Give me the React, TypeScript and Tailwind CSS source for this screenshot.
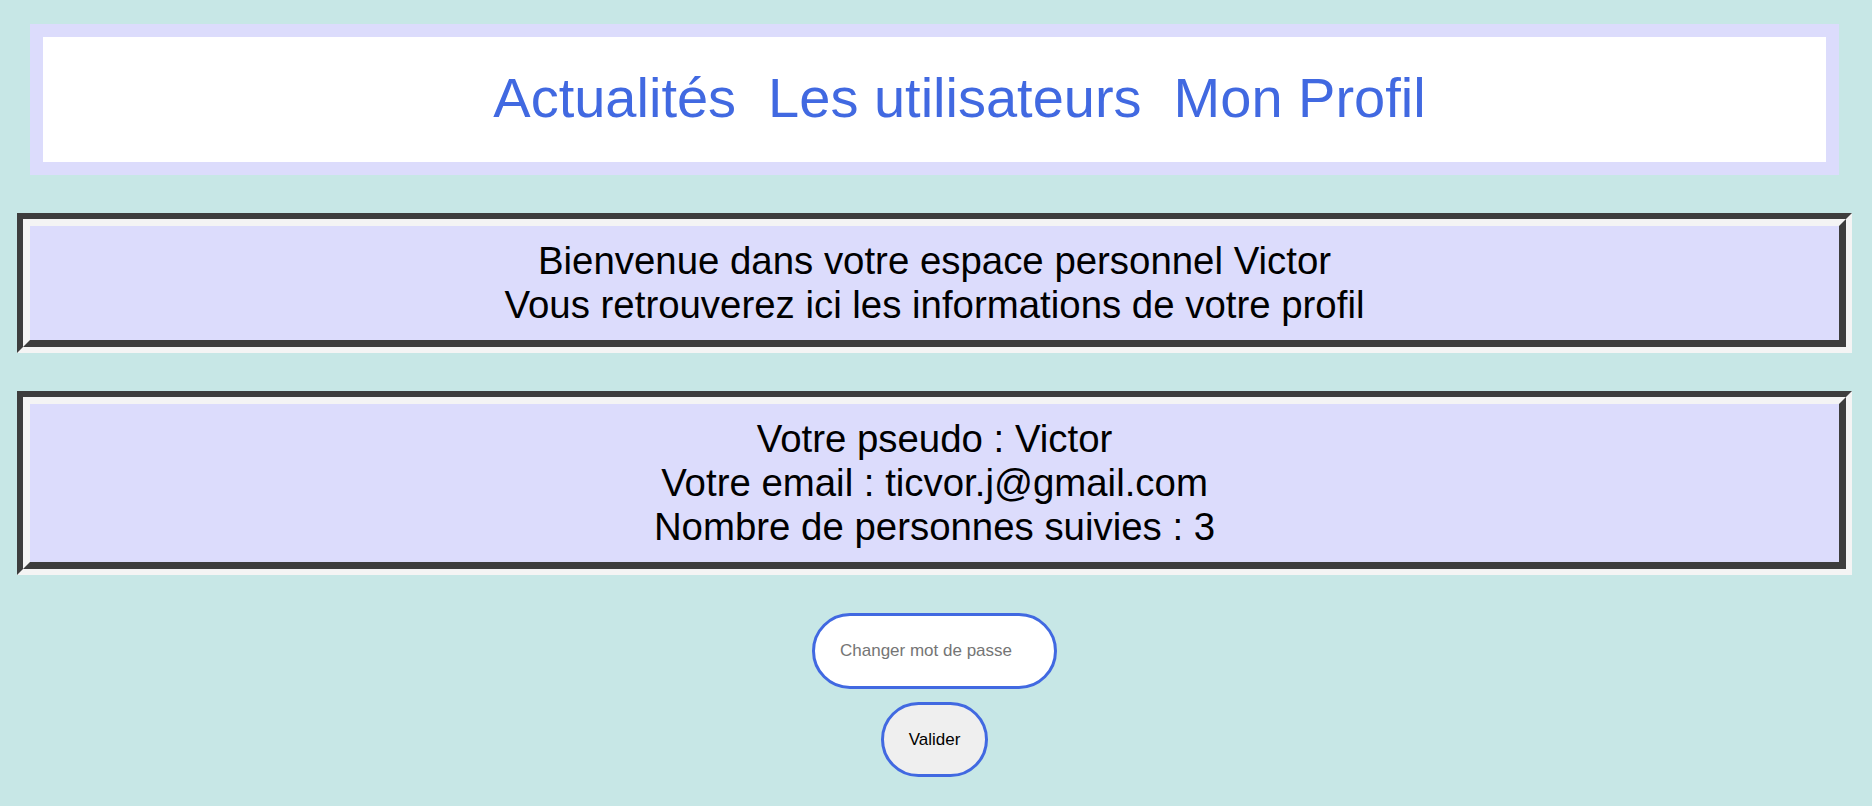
import React from 'react';

const font = "font-['Liberation_Sans',Arial,sans-serif]";

// groove-like bevel frame
function Panel({ children }: { children: React.ReactNode }) {
  return (
    <div className="mx-[17px] border-[6px] border-t-[#3d3d3d] border-l-[#3d3d3d] border-b-[#f4f4f4] border-r-[#f4f4f4]">
      <div className="border-[7px] border-t-[#f4f4f4] border-l-[#f4f4f4] border-b-[#3d3d3d] border-r-[#3d3d3d] bg-[#dcdcfc] py-[13px] text-center text-[38.4px] leading-[normal] text-black">
        {children}
      </div>
    </div>
  );
}

export default function App() {
  return (
    <div className={`min-h-screen w-full bg-[#c7e7e6] leading-[normal] ${font}`}>
      <div className="flex w-[1869px] flex-col pt-[24px]">
        {/* Nav */}
        <header className="mx-[30px] border-[13px] border-[#dcdcfc] bg-white">
          <nav className="flex h-[125px] items-center justify-center gap-[32px] pl-[50px] pb-[4px] text-[56px] leading-[normal] text-[#4169e1]">
            <a href="#">Actualités</a>
            <a href="#">Les utilisateurs</a>
            <a href="#">Mon Profil</a>
          </nav>
        </header>

        <div className="mt-[38px]">
          <Panel>
            <p>Bienvenue dans votre espace personnel Victor</p>
            <p>Vous retrouverez ici les informations de votre profil</p>
          </Panel>
        </div>

        <div className="mt-[38px]">
          <Panel>
            <p>Votre pseudo : Victor</p>
            <p>Votre email : ticvor.j@gmail.com</p>
            <p>Nombre de personnes suivies : 3</p>
          </Panel>
        </div>

        {/* Password form */}
        <form className="mt-[38px] flex flex-col items-center gap-[13px]">
          <input
            type="password"
            placeholder="Changer mot de passe"
            className="h-[76px] w-[245px] rounded-full border-[3px] border-[#4169e1] bg-white px-[25px] text-[17px] text-black outline-none placeholder:text-[#757575]"
          />
          <button
            type="button"
            className="h-[75px] w-[107px] rounded-full border-[3px] border-[#4169e1] bg-[#efefef] text-[17px] text-black"
          >
            Valider
          </button>
        </form>
      </div>
    </div>
  );
}
